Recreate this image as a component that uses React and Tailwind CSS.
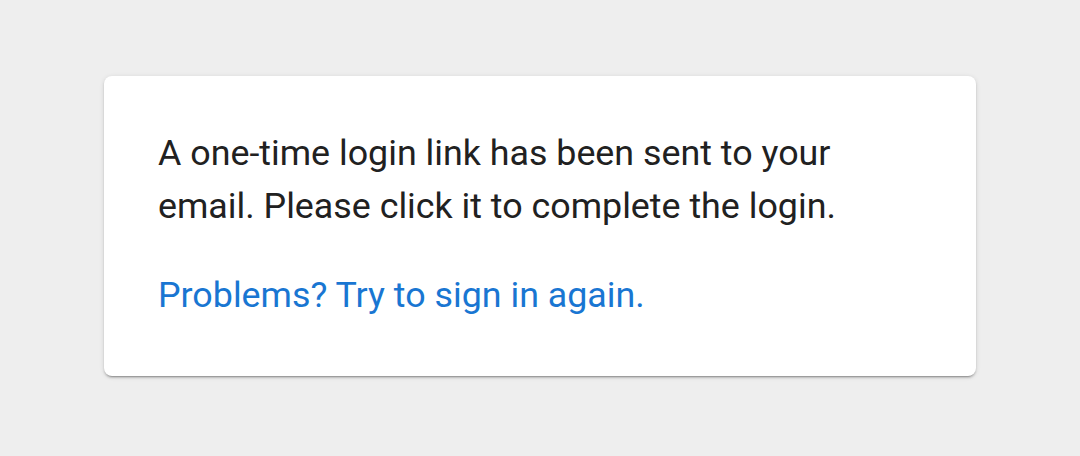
export default function App() {
  return (
    <div className="min-h-[456px] bg-[#eeeeee] pt-[76px] font-['Roboto',sans-serif]">
      <div className="mx-auto w-[872px] h-[300px] rounded-lg bg-white px-[54px] pt-[51px] shadow-[0_3px_1px_-2px_rgba(0,0,0,0.2),0_2px_2px_0_rgba(0,0,0,0.14),0_1px_5px_0_rgba(0,0,0,0.12)]">
        <p className="text-[35.8px] leading-[53px] text-[#212121]">
          A one-time login link has been sent to your email. Please click it to complete the login.
        </p>
        <a href="#" className="mt-[36px] block text-[35.8px] leading-[53px] text-[#1976d2]">
          Problems? Try to sign in again.
        </a>
      </div>
    </div>
  );
}
